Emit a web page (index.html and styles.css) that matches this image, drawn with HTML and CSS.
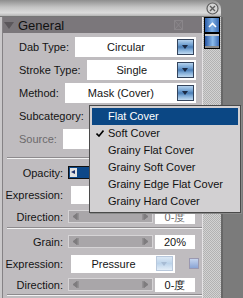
FILE: index.html
```html
<!DOCTYPE html>
<html lang="en">
<head>
  <meta charset="UTF-8" />
  <meta name="viewport" content="width=device-width, initial-scale=1.0" />
  <title>General</title>
  <link rel="stylesheet" href="styles.css">
</head>
<body>
  <div class="window">
    <div class="titlebar">
      <svg class="close" width="13" height="13" viewBox="0 0 13 13">
        <circle cx="6.5" cy="6.5" r="5.5" fill="#d4d4d4" stroke="#5e5e5e" stroke-width="1.2" />
        <path d="M4 4 L9 9 M9 4 L4 9" stroke="#5e5e5e" stroke-width="1.4" />
      </svg>
    </div>

    <div class="main">
      <div class="panel">
        <div class="header">
          <span class="twisty"></span>
          <span class="title">General</span>
          <span class="hdr-box">
            <svg width="7" height="8" viewBox="0 0 7 8"><path d="M0 0 L7 8 M7 0 L0 8" stroke="#8a868a" stroke-width="1" /></svg>
          </span>
        </div>

        <div class="group">
          <div class="row">
            <span class="label">Dab Type:</span>
            <div class="select"><span class="value">Circular</span><span class="drop"></span></div>
          </div>
          <div class="row">
            <span class="label">Stroke Type:</span>
            <div class="select"><span class="value">Single</span><span class="drop"></span></div>
          </div>
          <div class="row">
            <span class="label">Method:</span>
            <div class="select"><span class="value">Mask (Cover)</span><span class="drop"></span></div>
          </div>
          <div class="row">
            <span class="label">Subcategory:</span>
            <div class="select"><span class="value"></span><span class="drop"></span></div>
          </div>
          <div class="row">
            <span class="label dim">Source:</span>
            <div class="select"><span class="value"></span></div>
          </div>
        </div>

        <div class="sep"></div>

        <div class="grid">
          <span class="label">Opacity:</span>
          <div class="ctl">
            <div class="slider active"><span class="knob"></span></div>
            <div class="num"></div>
          </div>
          <span class="label">Expression:</span>
          <div class="ctl">
            <div class="select expr"><span class="value"></span><span class="drop"></span></div>
          </div>
          <span class="label">Direction:</span>
          <div class="ctl">
            <div class="slider">
              <svg width="7" height="7" viewBox="0 0 7 7"><path d="M0 3.5 L4 0.5 L4 6.5 Z M5 0 V7" fill="#7e7c7e" stroke="#7e7c7e" stroke-width="1" /></svg>
              <svg width="7" height="7" viewBox="0 0 7 7"><path d="M7 3.5 L3 0.5 L3 6.5 Z M2 0 V7" fill="#7e7c7e" stroke="#7e7c7e" stroke-width="1" /></svg>
            </div>
            <div class="num dim">0-度</div>
          </div>
        </div>

        <div class="sep tight"></div>

        <div class="grid last">
          <span class="label">Grain:</span>
          <div class="ctl">
            <div class="slider">
              <svg width="7" height="7" viewBox="0 0 7 7"><path d="M0 3.5 L4 0.5 L4 6.5 Z M5 0 V7" fill="#7e7c7e" stroke="#7e7c7e" stroke-width="1" /></svg>
              <svg width="7" height="7" viewBox="0 0 7 7"><path d="M7 3.5 L3 0.5 L3 6.5 Z M2 0 V7" fill="#7e7c7e" stroke="#7e7c7e" stroke-width="1" /></svg>
            </div>
            <div class="num">20%</div>
          </div>
          <span class="label">Expression:</span>
          <div class="ctl">
            <div class="select expr"><span class="value">Pressure</span><span class="drop off"></span></div>
            <span class="square"></span>
          </div>
          <span class="label">Direction:</span>
          <div class="ctl">
            <div class="slider">
              <svg width="7" height="7" viewBox="0 0 7 7"><path d="M0 3.5 L4 0.5 L4 6.5 Z M5 0 V7" fill="#7e7c7e" stroke="#7e7c7e" stroke-width="1" /></svg>
              <svg width="7" height="7" viewBox="0 0 7 7"><path d="M7 3.5 L3 0.5 L3 6.5 Z M2 0 V7" fill="#7e7c7e" stroke="#7e7c7e" stroke-width="1" /></svg>
            </div>
            <div class="num">0-度</div>
          </div>
        </div>

        <div class="sep end"></div>
      </div>

      <div class="scrollbar">
        <div class="sb-up">
          <svg width="9" height="6" viewBox="0 0 9 6"><path d="M1 5 L4.5 1.5 L8 5" fill="none" stroke="#fff" stroke-width="1.6" /></svg>
        </div>
        <div class="sb-thumb"></div>
        <div class="sb-track"></div>
      </div>
    </div>

    <ul class="popup">
      <li class="item selected">Flat Cover</li>
      <li class="item checked">
        <svg class="check" width="8" height="7" viewBox="0 0 8 7"><path d="M0.5 3.5 L3 6 L7.5 0.5" fill="none" stroke="#000" stroke-width="1.6" /></svg>
        Soft Cover
      </li>
      <li class="item">Grainy Flat Cover</li>
      <li class="item">Grainy Soft Cover</li>
      <li class="item">Grainy Edge Flat Cover</li>
      <li class="item">Grainy Hard Cover</li>
    </ul>
  </div>
</body>
</html>
```

FILE: styles.css
```css
body {
  margin: 0;
  font-family: "Liberation Sans", Arial, sans-serif;
  font-size: 11px;
  color: #141414;
  background-color: #7b7b7b;
}
.window {
  position: relative;
  width: 243px;
  height: 298px;
  overflow: hidden;
  background-color: #7b7b7b;
}
.titlebar {
  width: 221px;
  height: 17px;
  box-sizing: border-box;
  border-top-right-radius: 9px;
  background: linear-gradient(#8e8e8e, #c4c4c4 45%, #dcdcdc 80%, #b4b4b4);
  border-bottom: 1px solid #777;
  display: flex;
  justify-content: flex-end;
  align-items: center;
  padding-right: 2px;
}
.close {
  display: block;
}
.main {
  display: flex;
  height: 281px;
}
.panel {
  width: 203px;
  box-sizing: border-box;
  background-color: #bfbcbf;
  border-left: 2px solid #cac8ca;
  border-right: 1px solid #e4e2e4;
  box-shadow: inset 1px 0 #858285;
  padding-left: 1px;
}
.header {
  height: 16px;
  background-color: #7b777b;
  display: flex;
  align-items: center;
}
.twisty {
  width: 0;
  height: 0;
  margin-left: 1px;
  border-left: 5px solid transparent;
  border-right: 5px solid transparent;
  border-top: 7px solid #5b575b;
}
.title {
  margin-left: 4px;
  font-size: 13px;
  color: #111;
}
.hdr-box {
  margin-left: auto;
  margin-right: 19px;
  width: 9px;
  height: 10px;
  box-sizing: border-box;
  border: 1px solid #8a868a;
  display: flex;
  align-items: center;
  justify-content: center;
}
.group {
  display: flex;
  flex-direction: column;
  gap: 3px;
  padding: 4px 6px 0 16px;
}
.row {
  display: flex;
  align-items: center;
  gap: 6px;
  height: 20px;
}
.label {
  white-space: nowrap;
}
.dim {
  color: #6c6a6c;
}
.select {
  flex: 1;
  height: 20px;
  background-color: #fff;
  display: flex;
  align-items: center;
  padding-right: 2px;
}
.select .value {
  flex: 1;
  text-align: center;
  font-size: 11px;
}
.drop {
  width: 17px;
  height: 16px;
  box-sizing: border-box;
  border: 1px solid #34445c;
  background: linear-gradient(#b4d2ee, #6f9fd0 35%, #4a7db5 50%, #7eaad6 70%, #c2dbf1);
  position: relative;
}
.drop::after {
  content: "";
  position: absolute;
  left: 4px;
  top: 5px;
  border-left: 3.5px solid transparent;
  border-right: 3.5px solid transparent;
  border-top: 4px solid #1b2a45;
}
.drop.off {
  border-color: #b8c8dc;
  background: linear-gradient(#dbe8f5, #bcd3ea 50%, #e4eef8);
}
.drop.off::after {
  border-top-color: #a8bcd4;
}
.sep {
  height: 1px;
  margin: 8px 0 3px 4px;
  background-color: #8d8a8d;
  border-bottom: 1px solid #f2f2f2;
}
.sep.tight {
  margin: 0 0 2px 4px;
}
.sep.end {
  margin: 0 0 0 4px;
}
.grid {
  display: grid;
  grid-template-columns: 60px 1fr;
  grid-template-rows: 21px 21px 21px;
  row-gap: 1px;
  column-gap: 5px;
  align-items: center;
  padding-right: 6px;
}
.grid.last {
  grid-template-rows: 21px 21px 19px;
}
.grid .label {
  text-align: right;
  font-size: 11px;
}
.ctl {
  display: flex;
  align-items: center;
  gap: 2px;
}
.slider {
  width: 85px;
  height: 13px;
  box-sizing: border-box;
  background-color: #a9a6a9;
  border: 1px solid #d6d4d6;
  display: flex;
  align-items: center;
  justify-content: space-between;
  padding: 0 4px;
}
.slider.active {
  border-color: #111;
  background-color: #0d4889;
  padding: 0 1px;
}
.knob {
  width: 7px;
  height: 9px;
  background-color: #e2e2e2;
  position: relative;
}
.knob::after {
  content: "";
  position: absolute;
  left: 1px;
  top: 2px;
  border-top: 2.5px solid transparent;
  border-bottom: 2.5px solid transparent;
  border-right: 4px solid #1b2f6a;
}
.num {
  width: 40px;
  height: 14px;
  background-color: #fff;
  text-align: center;
  line-height: 14px;
  font-size: 11px;
}
.select.expr {
  flex: none;
  width: 102px;
  height: 18px;
  margin-left: 3px;
}
.select.expr .drop {
  height: 15px;
}
.square {
  width: 10px;
  height: 11px;
  box-sizing: border-box;
  margin-left: 12px;
  border: 1px solid #9a98b0;
  background: linear-gradient(#c4d4ee, #8aa4d4);
}
.scrollbar {
  width: 18px;
  border-right: 2px solid #676767;
  display: flex;
  flex-direction: column;
  background: repeating-conic-gradient(#d2d2d2 0 25%, #b2b2b2 0 50%) 0 0 / 2px 2px;
}
.sb-up,
.sb-thumb {
  height: 16px;
  box-sizing: border-box;
  margin: 0 1px;
  border: 1px solid #000;
}
.sb-up {
  background: linear-gradient(90deg, #2a5ca8, #7fb0e4 50%, #3a6cb4);
  display: flex;
  align-items: center;
  justify-content: center;
}
.sb-thumb {
  background: linear-gradient(90deg, #2452a0, #8cbcec 55%, #3c6cb6);
  box-shadow: inset 0 2px #c8c8c8, inset 0 -2px #8a8a8a;
}
.sb-track {
  flex: 1;
}
.popup {
  position: absolute;
  left: 89px;
  top: 105px;
  width: 152px;
  margin: 0;
  padding: 2px;
  box-sizing: border-box;
  list-style: none;
  background-color: #d2d0d2;
  border: 1px solid #4a4a4a;
  box-shadow: 1px 1px 0 #8a8a8a;
}
.item {
  position: relative;
  height: 17px;
  line-height: 17px;
  padding-left: 16px;
  font-size: 11px;
  color: #111;
  white-space: nowrap;
}
.item.selected {
  background-color: #0b4784;
  color: #fff;
}
.check {
  position: absolute;
  left: 4px;
  top: 5px;
}
```
